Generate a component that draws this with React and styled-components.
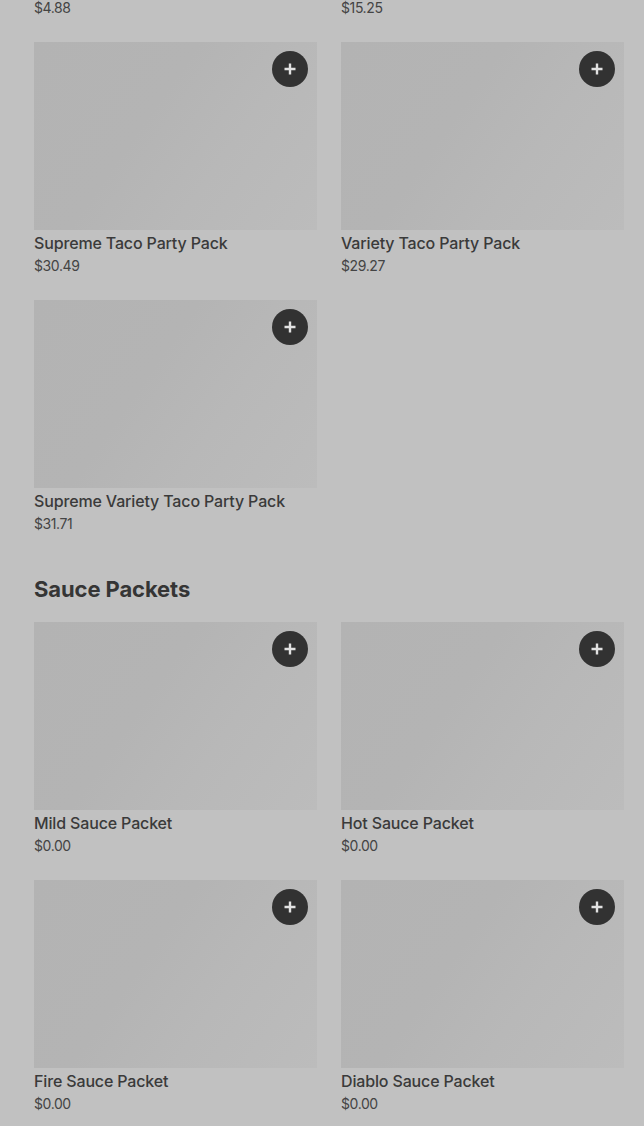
import styled, { createGlobalStyle } from "styled-components";

const sections = [
  {
    title: null,
    items: [
      { name: "Taco Party Pack", price: "$4.88" },
      { name: "Soft Taco Party Pack", price: "$15.25" },
      { name: "Supreme Taco Party Pack", price: "$30.49" },
      { name: "Variety Taco Party Pack", price: "$29.27" },
      { name: "Supreme Variety Taco Party Pack", price: "$31.71" },
    ],
  },
  {
    title: "Sauce Packets",
    items: [
      { name: "Mild Sauce Packet", price: "$0.00" },
      { name: "Hot Sauce Packet", price: "$0.00" },
      { name: "Fire Sauce Packet", price: "$0.00" },
      { name: "Diablo Sauce Packet", price: "$0.00" },
    ],
  },
];

const PlusIcon = () => (
  <svg width="14" height="14" viewBox="0 0 14 14" fill="none">
    <path d="M7 1.5v11M1.5 7h11" stroke="#e2e2e2" strokeWidth="2.4" />
  </svg>
);

const App = () => {
  return (
    <>
      <GlobalStyle />
      <Page>
        {sections.map((section, i) => (
          <Section key={i}>
            {section.title && <SectionTitle>{section.title}</SectionTitle>}
            <Grid>
              {section.items.map((item) => (
                <Card key={item.name}>
                  <Thumb>
                    <AddButton aria-label="Add">
                      <PlusIcon />
                    </AddButton>
                  </Thumb>
                  <Name>{item.name}</Name>
                  <Price>{item.price}</Price>
                </Card>
              ))}
            </Grid>
          </Section>
        ))}
      </Page>
    </>
  );
};

const GlobalStyle = createGlobalStyle`
  html, body {
    margin: 0;
    padding: 0;
    background: #c1c1c1;
    overflow: hidden;
  }
  body {
    font-family: Inter, "Noto Sans", sans-serif;
    color: #383838;
  }
`;

// page is scrolled: the first row sits mostly above the fold
const Page = styled.div`
  margin-top: -216px;
  padding: 0 20px 40px 34px;
`;

const Section = styled.section`
  display: flex;
  flex-direction: column;
`;

const SectionTitle = styled.h2`
  margin: 41px 0 19px;
  font-size: 22px;
  line-height: 28px;
  font-weight: 700;
  letter-spacing: -0.1px;
  color: #353535;
`;

const Grid = styled.div`
  display: grid;
  grid-template-columns: 1fr 1fr;
  column-gap: 24px;
  row-gap: 24px;
`;

const Card = styled.div`
  display: flex;
  flex-direction: column;
`;

const Thumb = styled.div`
  position: relative;
  height: 188px;
  background: linear-gradient(
    125deg,
    #b3b3b3 0%,
    #b4b4b4 40%,
    #b8b8b8 65%,
    #bcbcbc 100%
  );
`;

const AddButton = styled.button`
  position: absolute;
  top: 9px;
  right: 9px;
  width: 36px;
  height: 36px;
  border-radius: 50%;
  border: none;
  padding: 0;
  background: #323232;
  display: flex;
  align-items: center;
  justify-content: center;
  cursor: pointer;
`;

const Name = styled.div`
  margin-top: 2px;
  font-size: 16px;
  line-height: 22px;
  font-weight: 500;
  letter-spacing: -0.15px;
  color: #3a3a3a;
`;

const Price = styled.div`
  margin-top: 2px;
  font-size: 14px;
  line-height: 20px;
  font-weight: 400;
  color: #444;
  letter-spacing: -0.4px;
`;

export default App;
